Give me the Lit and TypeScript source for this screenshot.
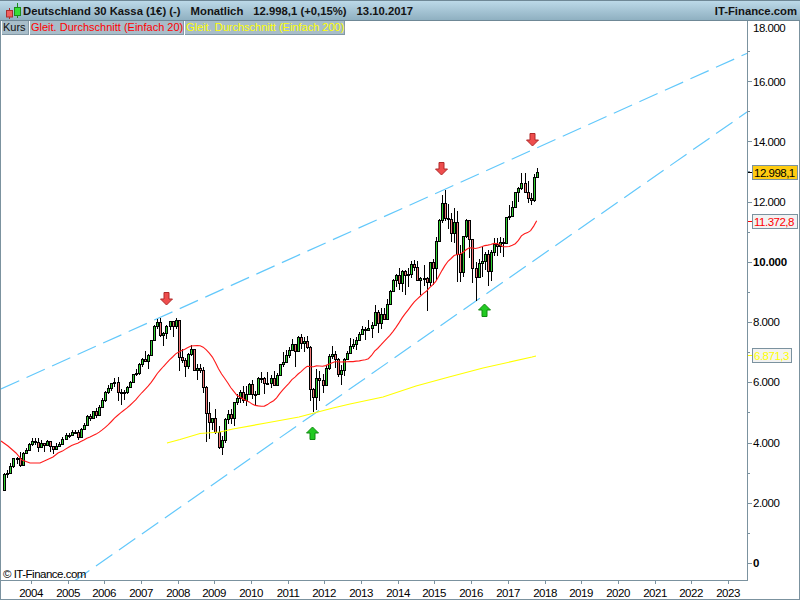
import { LitElement, html, css, svg } from "lit";
import { customElement } from "lit/decorators.js";

// [close, high, low] monthly, Apr 2003 .. Oct 2017
const ROWS: number[][] = [
[2942,3000,2400],[2982,3100,2820],[3221,3320,2950],[3487,3500,3150],[3484,3530,3280],[3257,3670,3200],[3655,3680,3220],[3745,3830,3620],[3965,3990,3740],
[4058,4160,3900],[4018,4150,3930],[3856,4140,3690],[3985,4100,3840],[3921,3980,3690],[4052,4100,3880],[3895,4060,3700],[3785,3900,3620],[3893,3970,3740],[3960,4030,3840],[4126,4190,3950],[4256,4300,4100],
[4254,4330,4160],[4350,4400,4240],[4349,4430,4280],[4185,4400,4100],[4460,4490,4150],[4586,4650,4430],[4886,4900,4560],[4829,4950,4730],[5044,5060,4800],[4929,5140,4800],[5193,5240,4920],[5408,5470,5180],
[5674,5720,5340],[5796,5900,5620],[5970,5990,5700],[6009,6150,5850],[5692,6160,5390],[5683,5770,5240],[5681,5730,5400],[5859,5890,5600],[6004,6050,5820],[6268,6280,5990],[6309,6450,6200],[6597,6630,6250],
[6789,6800,6520],[6715,7040,6680],[6917,6950,6440],[7408,7420,6900],[7883,7900,7390],[8007,8090,7760],[7584,8150,7500],[7638,7680,7200],[7861,7900,7450],[8019,8040,7750],[7870,8030,7500],[8067,8130,7780],
[6851,8080,6380],[6748,7100,6650],[6535,6790,6170],[6948,6970,6450],[7096,7230,6880],[6418,7090,6400],[6479,6620,6090],[6422,6600,6300],[5831,6500,5630],[4988,5870,4010],[4669,5340,4130],[4810,4830,4400],
[4338,5110,4270],[3843,4550,3800],[4085,4200,3590],[4769,4820,4000],[4941,5080,4600],[4809,5110,4610],[5332,5350,4550],[5465,5620,5250],[5675,5760,5300],[5415,5890,5300],[5625,5880,5200],[5957,5970,5600],
[5608,6090,5430],[5598,5700,5250],[6153,6170,5620],[6135,6340,5990],[5964,6170,5600],[5966,6340,5900],[6148,6250,5800],[5925,6390,5900],[6229,6320,5900],[6601,6620,6200],[6688,7000,6500],[6914,7080,6700],
[7077,7180,6800],[7272,7440,7060],[7041,7180,6510],[7514,7530,6990],[7293,7600,7100],[7376,7500,6990],[7158,7530,7100],[5784,7190,5370],[5502,5800,5000],[6141,6430,5080],[6088,6360,5370],[5898,6280,5650],
[6458,6560,5900],[6856,6950,6400],[6947,7190,6770],[6761,7050,6480],[6264,6800,6160],[6416,6560,5910],[6772,6800,6200],[6970,7030,6730],[7216,7480,6960],[7260,7430,7090],[7405,7490,7060],[7612,7680,7400],
[7776,7870,7580],[7741,7840,7420],[7795,8080,7700],[7914,8000,7460],[8348,8560,7900],[7959,8400,7650],[8276,8450,7780],[8103,8480,8100],[8594,8770,8100],[9033,9050,8570],[9405,9420,9040],[9552,9600,9170],
[9306,9800,9080],[9692,9720,9000],[9555,9730,8900],[9603,9800,9170],[9943,10030,9450],[9833,10050,9700],[9407,10030,9400],[9470,9480,8900],[9474,9890,9200],[9326,9480,8350],[9980,10000,9200],[9805,10100,9220],
[10694,10810,9380],[11401,11430,10650],[11966,12220,11300],[11454,12390,11350],[11413,11920,11100],[10945,11630,10660],[11308,11800,10630],[10259,11670,9340],[9660,10550,9330],[10850,10850,9500],[11382,11430,10800],[10743,11300,10120],
[9798,10500,9310],[9495,9990,8700],[9965,10100,9500],[10038,10480,9480],[10262,10340,9730],[9680,10400,9210],[10337,10400,9370],[10592,10800,10200],[10511,10800,10200],[10665,10830,10300],[10640,10800,10170],[11481,11480,10620],
[11535,11890,11400],[11834,12030,11500],[12312,12310,11850],[12438,12490,12000],[12615,12950,12400],[12325,12950,12300],[12118,12680,11950],[12055,12300,11870],[12829,12900,12000],[12998,13100,12800],
];

const Y = (v: number) => 563 - v * 0.03012;
const X = (i: number) => 4.3 + i * 3.06;

const AXIS_LABELS: [number, string, number, boolean][] = [
  [18000, "18.000", 32, false],
  [16000, "16.000", 86, false],
  [14000, "14.000", 146, false],
  [12000, "12.000", 206, false],
  [10000, "10.000", 266, true],
  [8000, "8.000", 326, false],
  [6000, "6.000", 386, false],
  [4000, "4.000", 447, false],
  [2000, "2.000", 507, false],
  [0, "0", 567, true],
];

const YEARS = Array.from({ length: 20 }, (_, k) => 2004 + k);
const YELLOW = "167,443 180,439.5 200,433.5 220,432 233,429 266,423 299,417 333,408 350,404 383,397 416,386 449,377 483,368 532,357 536,356";
const RED_START: number[][] = [[1,441],[8,446],[16,453],[22,460],[30,463],[40,463],[53,457],[58,453]];

function redPoints(): string {
  const pts = RED_START.map((p) => p.join(","));
  for (let i = 19; i < ROWS.length; i++) {
    let s = 0;
    for (let j = i - 19; j <= i; j++) s += ROWS[j][0];
    pts.push(`${X(i).toFixed(1)},${Y(s / 20).toFixed(1)}`);
  }
  return pts.join(" ");
}

const downArrow = (x: number, top: number) =>
  svg`<path class="arrow-down" d="M${x - 2.5} ${top + .5}h5v6.5h3.5l-6 6l-6 -6h3.5z"/>`;
const upArrow = (x: number, top: number) =>
  svg`<path class="arrow-up" d="M${x - 2.5} ${top + 12.5}h5v-6.5h3.5l-6 -6l-6 6h3.5z"/>`;

@customElement("app-root")
export class AppRoot extends LitElement {
  static styles = css`
    :host {
      display: flex;
      flex-direction: column;
      width: 800px;
      height: 600px;
      box-sizing: border-box;
      background: #fff;
      font-family: "Liberation Sans", Arial, sans-serif;
      font-size: 11px;
      color: #000;
      overflow: hidden;
    }
    .head {
      flex: none;
      height: 21px;
      box-sizing: border-box;
      display: flex;
      align-items: center;
      padding: 0 3px 0 3px;
      border-top: 1px solid #6f8896;
      border-bottom: 1px solid #6f8896;
      background: linear-gradient(#bcd9e8, #8fb0c1);
      font-weight: bold;
      font-size: 11.3px;
      color: #141414;
      white-space: pre;
    }
    .logo { width: 20px; height: 19px; flex: none; display: block; margin-top: -1px; }
    .logo .r { fill: #f06060; stroke: #a83030; }
    .logo .g { fill: #35e035; stroke: #1c8c1c; }
    .title, .sym, .price { margin-right: 10px; }
    .site { margin-left: auto; }
    .body {
      flex: 1;
      position: relative;
      border-left: 1px solid #7b929f;
      border-right: 1px solid #7b929f;
      border-bottom: 1px solid #7b929f;
    }
    .legend {
      position: absolute;
      left: 1px;
      top: 0;
      display: flex;
      height: 13px;
      background: #fff;
      line-height: 13px;
    }
    .tab {
      padding: 0 1px 0 1px;
      margin-right: 1px;
      background: #a8bdc9;
      border-right: 1px solid #8399a6;
      border-bottom: 1px solid #8399a6;
      height: 13px;
      white-space: nowrap;
    }
    .tab.k { color: #111; width: 24px; }
    .tab.s20 { color: #ff0000; width: 151px; }
    .tab.s200 { color: #ffff00; width: 157px; margin-right: 0; }
    svg.chart { display: block; width: 798px; height: 578px; }
    .wick { stroke: #000; stroke-width: 1; shape-rendering: crispEdges; }
    .up { fill: #33d033; stroke: #000; shape-rendering: crispEdges; }
    .dn { fill: #f07878; stroke: #000; shape-rendering: crispEdges; }
    .trend { fill: none; stroke: #62c8fb; stroke-width: 1.2; stroke-dasharray: 20 8; }
    .ma-r { fill: none; stroke: #ff1a1a; stroke-width: 1.1; }
    .ma-y { fill: none; stroke: #ffff00; stroke-width: 1.1; }
    .arrow-down { fill: #ee4d4d; stroke: #b02a2a; }
    .arrow-up { fill: #22c922; stroke: #118a11; }
    .axis { stroke: #7b929f; stroke-width: 1; shape-rendering: crispEdges; fill: none; }
    .lab { font-family: "Liberation Sans", Arial, sans-serif; font-size: 11.5px; letter-spacing: -0.5px; fill: #000; }
    .lab.b { font-weight: bold; letter-spacing: -0.2px; }
    .lab.c { text-anchor: middle; }
    .lab.red { fill: #ff0000; }
    .lab.yel { fill: #ffff00; }
    .badge { stroke: #7b929f; stroke-width: 1; shape-rendering: crispEdges; fill: #f2f2f2; }
    .badge.cur { fill: #ffcc11; }
    .t-blk { stroke: #000; shape-rendering: crispEdges; }
    .t-red { stroke: #ff0000; shape-rendering: crispEdges; }
    .t-yel { stroke: #ffff00; shape-rendering: crispEdges; }
  `;

  private candles() {
    let prev = 2424;
    return ROWS.map((r, i) => {
      const [c, h, l] = r;
      const o = prev;
      prev = c;
      const x = Math.round(X(i));
      const top = Math.round(Y(Math.max(o, c)));
      const bot = Math.round(Y(Math.min(o, c)));
      const hy = Math.round(Y(h));
      const ly = Math.round(Y(l));
      return svg`<line class="wick" x1=${x + 0.5} x2=${x + 0.5} y1=${hy} y2=${ly}/>
        <rect class=${c >= o ? "up" : "dn"} x=${x - 0.5} y=${top + 0.5} width="2" height=${Math.max(bot - top, 1)}/>`;
    });
  }

  render() {
    const ticks: number[] = [];
    for (let v = 1000; v <= 17000; v += 2000) ticks.push(v);
    return html`
      <div class="head">
        <svg class="logo" viewBox="0 0 20 19">
          <path class="r" d="M6.5 7v11" fill="none"/>
          <rect class="r" x="3.5" y="9.5" width="6" height="6.5"/>
          <path class="g" d="M14.5 2v15" fill="none"/>
          <rect class="g" x="11.5" y="6.5" width="6" height="8"/>
        </svg>
        <span class="title">Deutschland 30 Kassa (1€) (-)</span>
        <span class="sym">Monatlich</span>
        <span class="price">12.998,1 (+0,15%)</span>
        <span>13.10.2017</span>
        <span class="site">IT-Finance.com</span>
      </div>
      <div class="body">
        <svg class="chart" viewBox="1 21 798 578">
          <defs>
            <clipPath id="plot"><rect x="1" y="21" width="746" height="559"/></clipPath>
          </defs>
          <g clip-path="url(#plot)">
            <line class="trend" x1="1" y1="389" x2="760" y2="47.5"/>
            <line class="trend" x1="73" y1="582" x2="760" y2="103"/>
            ${this.candles()}
            <polyline class="ma-r" points=${redPoints()}/>
            <polyline class="ma-y" points=${YELLOW}/>
          </g>
          ${downArrow(166.5, 292)}
          ${downArrow(441.5, 162)}
          ${downArrow(532.5, 133)}
          ${upArrow(312.5, 427)}
          ${upArrow(484.5, 304)}

          <path class="axis" d="M747.5 21V580.5H1"/>
          ${AXIS_LABELS.filter((a) => a[0] < 18000).map((a) => {
            const y = Math.round(Y(a[0])) + 0.5;
            return svg`<line class="axis" x1="748" x2="752" y1=${y} y2=${y}/>`;
          })}
          ${ticks.map((v) => {
            const y = Math.round(Y(v)) + 0.5;
            return svg`<line class="axis" x1="748" x2="750" y1=${y} y2=${y}/>`;
          })}
          ${AXIS_LABELS.map(
            (a) => svg`<text class=${a[3] ? "lab b" : "lab"} x="753" y=${a[2]}>${a[1]}</text>`
          )}
          ${YEARS.map((yr, k) => {
            const x = Math.round(31 + k * 36.68) + 0.5;
            return svg`<line class="axis" x1=${x} x2=${x} y1="581" y2="584"/>
              <text class="lab c" x=${x - 0.5} y="597">${yr}</text>`;
          })}
          <text class="lab" x="3" y="578">© IT-Finance.com</text>

          <line class="t-blk" x1="748" x2="752" y1="172.5" y2="172.5"/>
          <rect class="badge cur" x="752.5" y="165.5" width="45" height="14"/>
          <text class="lab" x="754" y="177">12.998,1</text>

          <line class="t-red" x1="748" x2="752" y1="221.5" y2="221.5"/>
          <rect class="badge" x="752.5" y="214.5" width="45" height="14"/>
          <text class="lab red" x="754" y="226">11.372,8</text>

          <line class="t-yel" x1="748" x2="752" y1="355.5" y2="355.5"/>
          <rect class="badge" x="752.5" y="348.5" width="39" height="14"/>
          <text class="lab yel" x="754" y="360">6.871,3</text>
        </svg>
        <div class="legend">
          <div class="tab k">Kurs</div>
          <div class="tab s20">Gleit. Durchschnitt (Einfach 20)</div>
          <div class="tab s200">Gleit. Durchschnitt (Einfach 200)</div>
        </div>
      </div>
    `;
  }
}
